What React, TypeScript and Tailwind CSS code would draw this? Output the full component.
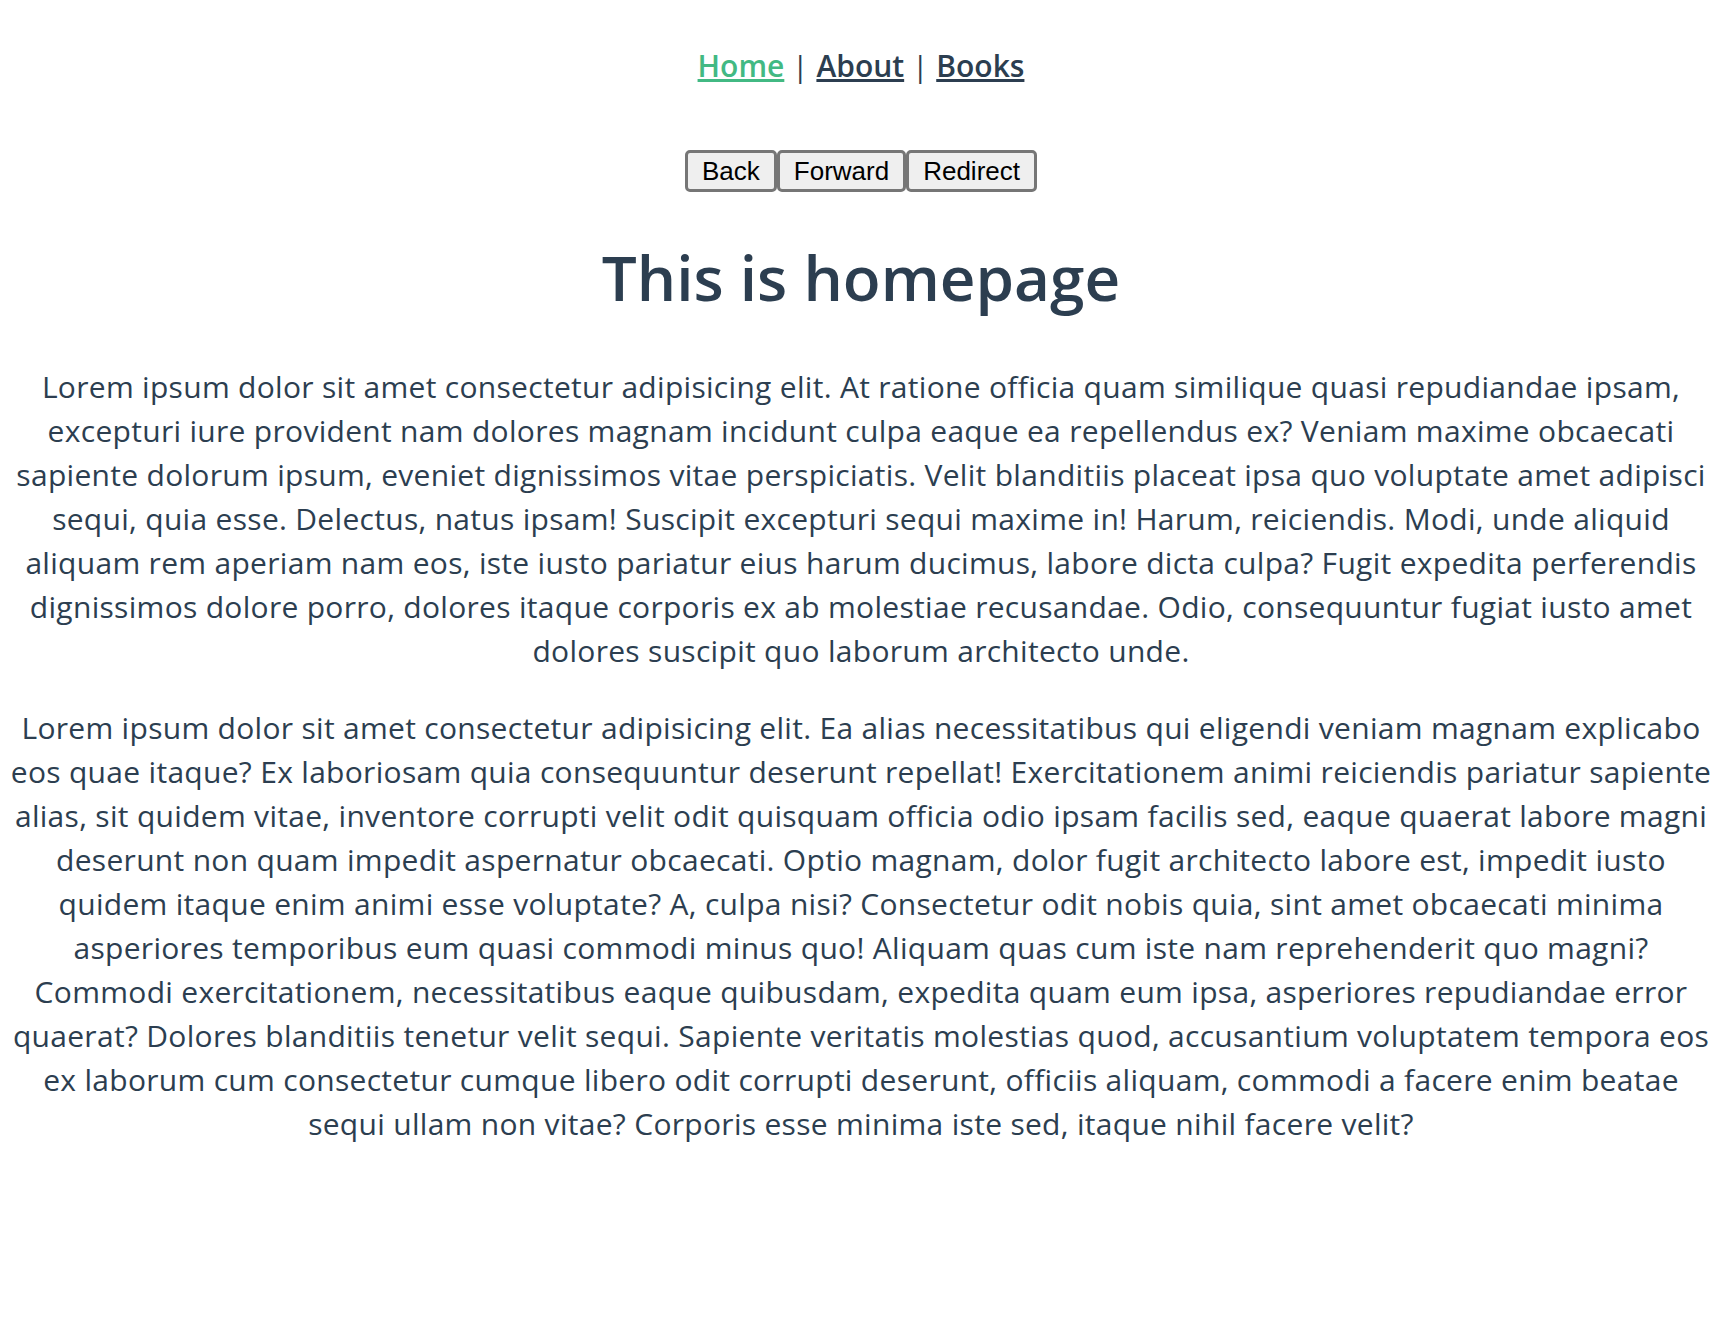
const P1 = [
  'Lorem ipsum dolor sit amet consectetur adipisicing elit. At ratione officia quam similique quasi repudiandae ipsam,',
  'excepturi iure provident nam dolores magnam incidunt culpa eaque ea repellendus ex? Veniam maxime obcaecati',
  'sapiente dolorum ipsum, eveniet dignissimos vitae perspiciatis. Velit blanditiis placeat ipsa quo voluptate amet adipisci',
  'sequi, quia esse. Delectus, natus ipsam! Suscipit excepturi sequi maxime in! Harum, reiciendis. Modi, unde aliquid',
  'aliquam rem aperiam nam eos, iste iusto pariatur eius harum ducimus, labore dicta culpa? Fugit expedita perferendis',
  'dignissimos dolore porro, dolores itaque corporis ex ab molestiae recusandae. Odio, consequuntur fugiat iusto amet',
  'dolores suscipit quo laborum architecto unde.',
]

const P2 = [
  'Lorem ipsum dolor sit amet consectetur adipisicing elit. Ea alias necessitatibus qui eligendi veniam magnam explicabo',
  'eos quae itaque? Ex laboriosam quia consequuntur deserunt repellat! Exercitationem animi reiciendis pariatur sapiente',
  'alias, sit quidem vitae, inventore corrupti velit odit quisquam officia odio ipsam facilis sed, eaque quaerat labore magni',
  'deserunt non quam impedit aspernatur obcaecati. Optio magnam, dolor fugit architecto labore est, impedit iusto',
  'quidem itaque enim animi esse voluptate? A, culpa nisi? Consectetur odit nobis quia, sint amet obcaecati minima',
  'asperiores temporibus eum quasi commodi minus quo! Aliquam quas cum iste nam reprehenderit quo magni?',
  'Commodi exercitationem, necessitatibus eaque quibusdam, expedita quam eum ipsa, asperiores repudiandae error',
  'quaerat? Dolores blanditiis tenetur velit sequi. Sapiente veritatis molestias quod, accusantium voluptatem tempora eos',
  'ex laborum cum consectetur cumque libero odit corrupti deserunt, officiis aliquam, commodi a facere enim beatae',
  'sequi ullam non vitae? Corporis esse minima iste sed, itaque nihil facere velit?',
]

function Para({ lines, className = '' }: { lines: string[]; className?: string }) {
  return (
    <p className={`flex flex-col items-center text-[30px] leading-[44px] tracking-[0.3px] ${className}`}>
      {lines.map((l, i) => (
        <span key={i} className="whitespace-nowrap">{l}</span>
      ))}
    </p>
  )
}

export default function App() {
  const btn = 'h-[42px] px-[14px] bg-[#efefef] border-[3px] border-[#767676] rounded-[5px] text-[26px] leading-none text-black font-["Liberation_Sans",Arial,sans-serif]'
  return (
    <div className="min-h-screen bg-white px-[13px] text-center text-[#2c3e50] font-['Open_Sans','Noto_Sans',sans-serif]">
      {/* Nav */}
      <div className="pt-[44px] text-[30px] leading-[44px] font-semibold">
        <a href="#" className="underline text-[#42b983]">Home</a>
        <span className="font-normal"> | </span>
        <a href="#" className="underline">About</a>
        <span className="font-normal"> | </span>
        <a href="#" className="underline">Books</a>
      </div>

      {/* History buttons */}
      <div className="mt-[62px] flex justify-center">
        <button className={btn}>Back</button>
        <button className={btn}>Forward</button>
        <button className={btn}>Redirect</button>
      </div>

      <h1 className="mt-[47px] text-[62px] leading-[76px] font-semibold">This is homepage</h1>

      <Para lines={P1} className="mt-[50px]" />
      <Para lines={P2} className="mt-[33px]" />
    </div>
  )
}
